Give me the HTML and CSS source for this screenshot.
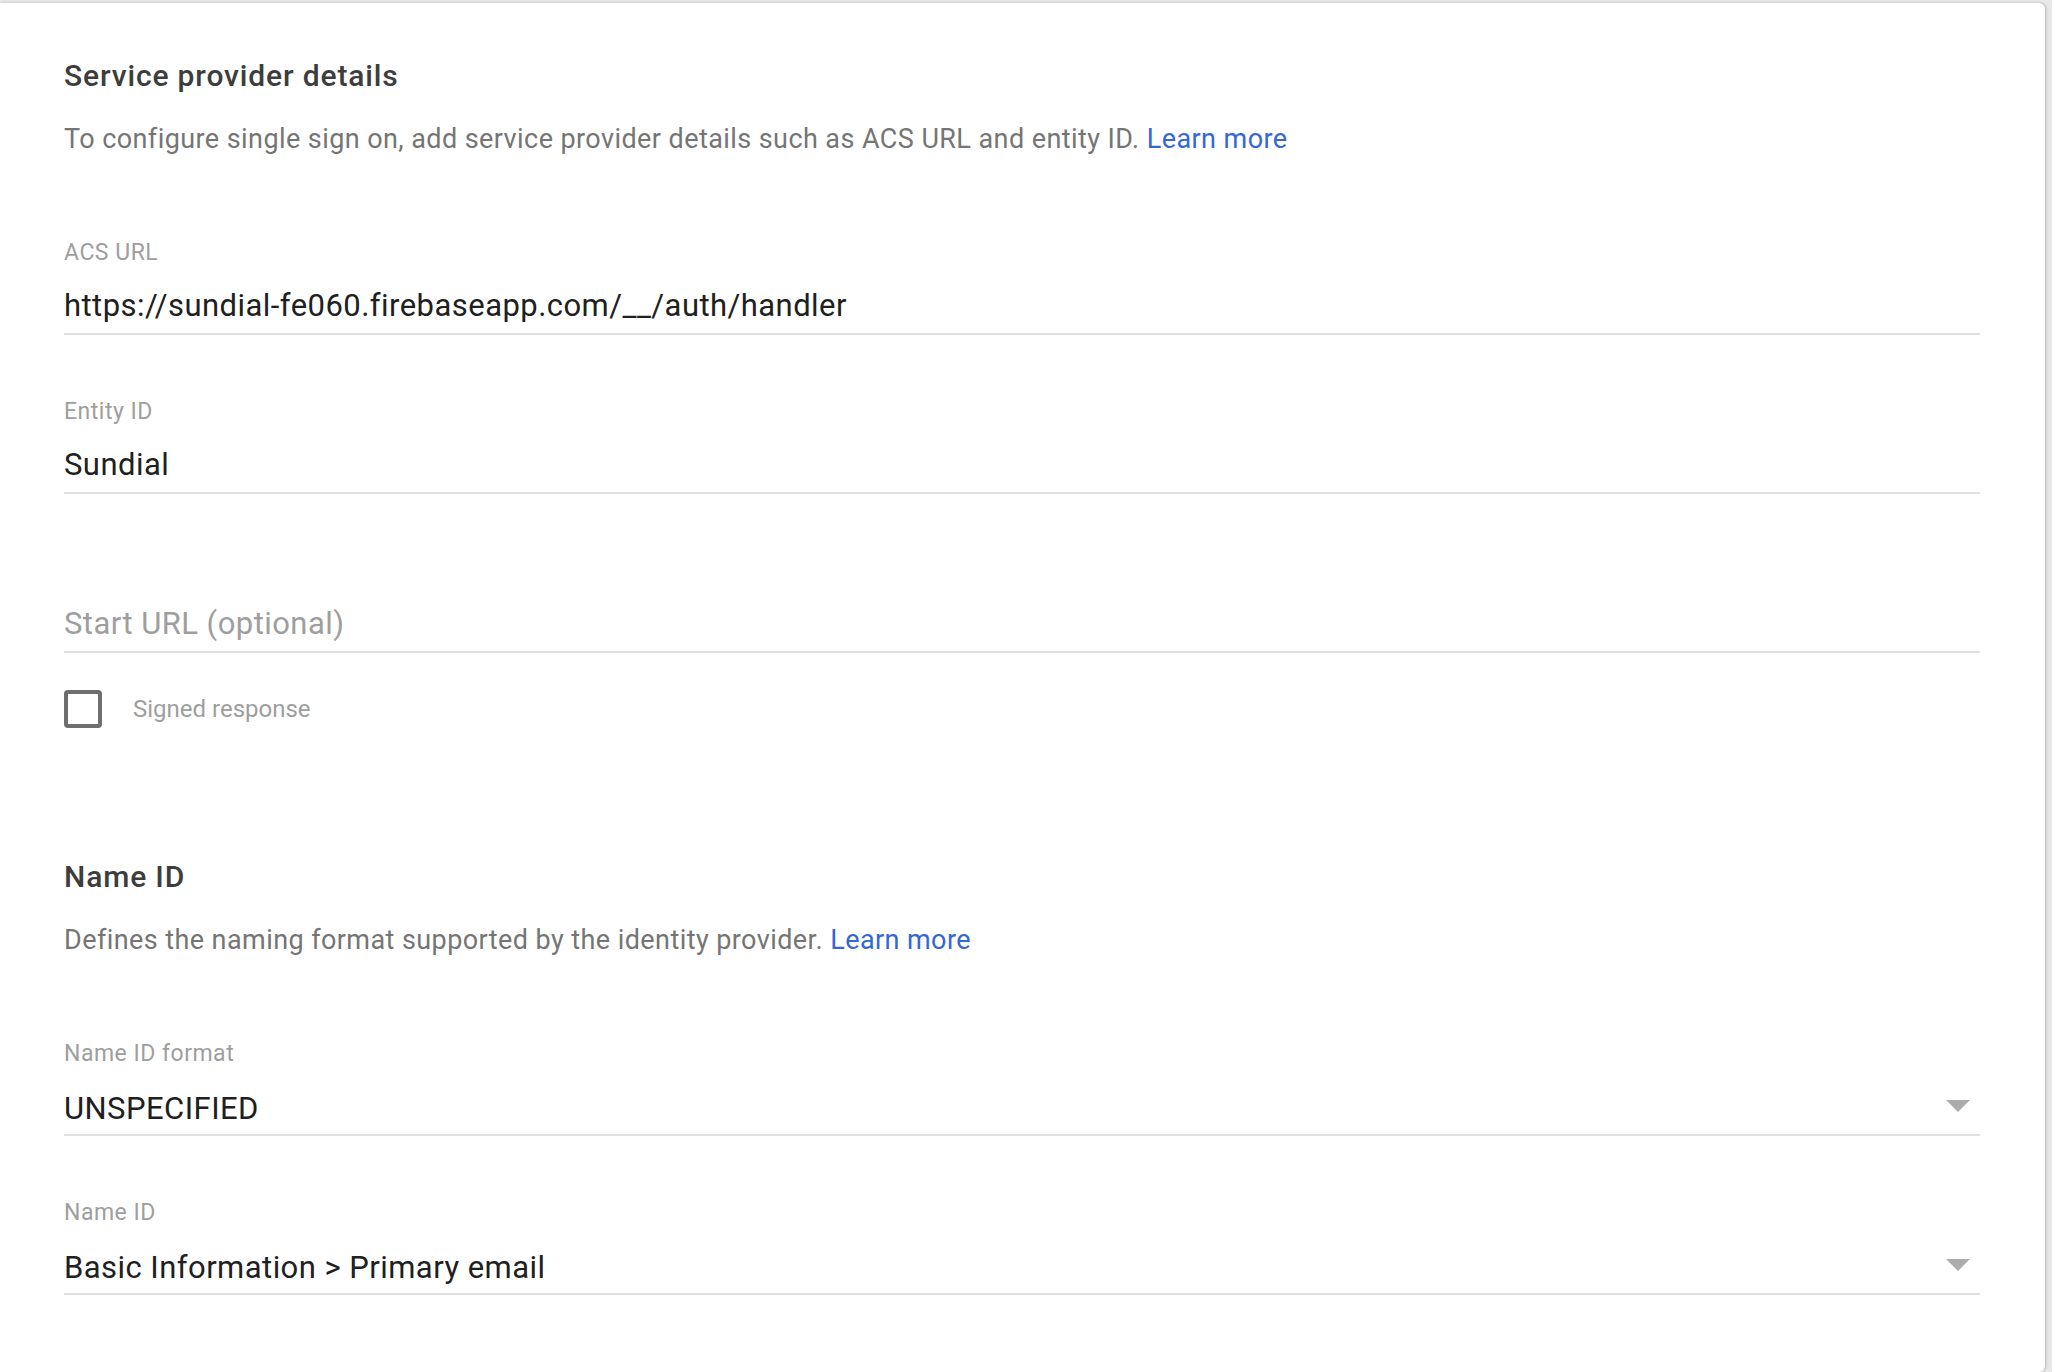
FILE: index.html
```html
<!DOCTYPE html>
<html lang="en">
<head>
<meta charset="utf-8">
<title>Service provider details</title>
<link rel="stylesheet" href="styles.css">
</head>
<body>
<div class="card">
  <section class="section">
    <h2 class="section-title">Service provider details</h2>
    <p class="section-desc">To configure single sign on, add service provider details such as ACS URL and entity ID. <a class="link" href="#">Learn more</a></p>

    <div class="field">
      <div class="field-label">ACS URL</div>
      <div class="field-input"><span class="field-value">https://sundial-fe060.firebaseapp.com/__/auth/handler</span></div>
    </div>

    <div class="field">
      <div class="field-label">Entity ID</div>
      <div class="field-input"><span class="field-value">Sundial</span></div>
    </div>

    <div class="field">
      <div class="field-label"></div>
      <div class="field-input"><span class="field-placeholder">Start URL (optional)</span></div>
    </div>

    <label class="checkbox-row">
      <span class="checkbox"></span>
      <span class="checkbox-text">Signed response</span>
    </label>
  </section>

  <section class="section section-second">
    <h2 class="section-title">Name ID</h2>
    <p class="section-desc">Defines the naming format supported by the identity provider. <a class="link" href="#">Learn more</a></p>

    <div class="field">
      <div class="field-label">Name ID format</div>
      <div class="field-input field-select"><span class="field-value">UNSPECIFIED</span><span class="select-arrow"></span></div>
    </div>

    <div class="field">
      <div class="field-label">Name ID</div>
      <div class="field-input field-select"><span class="field-value">Basic Information &gt; Primary email</span><span class="select-arrow"></span></div>
    </div>
  </section>
</div>
</body>
</html>
```

FILE: styles.css
```css
html, body {
  margin: 0;
  padding: 0;
}

body {
  background: #e8e8e8;
  font-family: Roboto, "Liberation Sans", Arial, sans-serif;
  overflow: hidden;
}

.card {
  box-sizing: border-box;
  margin: 3px 7px 0 0;
  height: calc(100vh - 3px);
  background: #ffffff;
  border-radius: 0 6px 6px 0;
  box-shadow: 1px 0 3px rgba(0, 0, 0, 0.22);
  padding: 57px 65px 0 64px;
}

.section-title {
  margin: 0;
  font-size: 30px;
  line-height: 32px;
  font-weight: 500;
  letter-spacing: 0.85px;
  color: #3d3d3d;
}

.section-desc {
  margin: 31px 0 0;
  font-size: 27px;
  line-height: 32px;
  font-weight: 400;
  letter-spacing: 0.42px;
  color: #757575;
}

.link {
  color: #3367d6;
  text-decoration: none;
}

.field {
  margin-top: 64px;
}

.section-desc + .field {
  margin-top: 85px;
}

.field-label {
  height: 26px;
  font-size: 23px;
  line-height: 26px;
  letter-spacing: 0.5px;
  color: #9e9e9e;
}

.field-input {
  position: relative;
  margin-top: 22px;
  padding-bottom: 9px;
  border-bottom: 2px solid #e0e0e0;
  height: 36px;
  font-size: 31px;
  line-height: 36px;
  letter-spacing: 0.45px;
}

.field-value {
  color: #202020;
}

.field-placeholder {
  color: #9e9e9e;
}

.field-select .field-value {
  display: inline-block;
  transform: translateY(2px);
}

.select-arrow {
  position: absolute;
  right: 10px;
  top: 11px;
  width: 0;
  height: 0;
  border-left: 12px solid transparent;
  border-right: 12px solid transparent;
  border-top: 12px solid #acacac;
}

.checkbox-row {
  display: flex;
  align-items: center;
  gap: 31px;
  margin-top: 37px;
}

.checkbox {
  box-sizing: border-box;
  width: 38px;
  height: 38px;
  border: 4px solid #6e6e6e;
  border-radius: 4px;
}

.checkbox-text {
  font-size: 24px;
  line-height: 28px;
  color: #9e9e9e;
}

.section-second {
  margin-top: 133px;
}
```
